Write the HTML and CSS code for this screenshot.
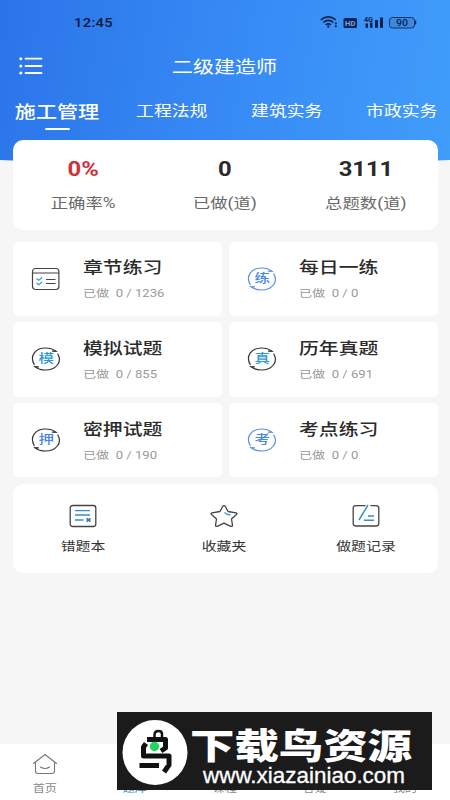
FILE: index.html
```html
<!DOCTYPE html>
<html lang="zh-CN">
<head>
<meta charset="utf-8">
<title>二级建造师</title>
<link rel="stylesheet" href="styles.css">
</head>
<body>
<svg width="0" height="0" class="defs">
  <defs>
    <g id="ring" fill="none" stroke-width="1.2" stroke-linecap="round">
      <path d="M3.2 17.500C-1.500 9 4 1 14.500 1c4.500 0 8 1.300 10.500 3.300l-3.500-.1M26.800 7C31.500 15 25 23 14.500 23c-4.500 0-8-1.300-10.500-3.300l3.500.1"/>
    </g>
  </defs>
</svg>
<div class="app">
  <header class="header">
    <div class="status">
      <span class="w clock">12:45</span>
      <svg class="signals" width="98" height="16" viewBox="0 0 98 16">
        <g fill="none" stroke="#0c2450" stroke-width="1.700">
          <path d="M.8 5.800Q8.300-.2 15.800 5.800M3.300 8.400Q8.300 4.400 13.300 8.400M5.700 10.800Q8.300 8.800 10.900 10.800"/>
        </g>
        <g fill="#0c2450">
          <circle cx="8.300" cy="12.700" r="1.100"/><circle cx="15.800" cy="9.400" r="1.100"/><circle cx="15.800" cy="12.300" r="1.100"/>
          <rect x="23.500" y="4" width="13.500" height="10" rx="1.500"/>
          <rect x="45.500" y="9.500" width="2.500" height="4.300"/><rect x="50" y="8.500" width="2.500" height="5.300"/><rect x="55" y="6" width="3" height="7.800"/><rect x="60" y="3.500" width="3" height="10.300"/>
          <rect x="94.500" y="6.500" width="1.700" height="4" rx=".8"/>
        </g>
        <text x="25" y="11.500" class="hd" textLength="10.500" lengthAdjust="spacingAndGlyphs">HD</text>
        <text x="44" y="7.500" class="net" textLength="9" lengthAdjust="spacingAndGlyphs">4G</text>
        <rect x="69.500" y="3.500" width="25" height="10.500" rx="3" fill="#3f88e2" stroke="#143260"/>
        <text x="76" y="12" class="pct" textLength="12" lengthAdjust="spacingAndGlyphs">90</text>
      </svg>
    </div>
    <div class="titlebar">
      <svg class="menu" width="24" height="18" viewBox="0 0 24 18">
        <g stroke="#fff" stroke-width="1.800" stroke-linecap="round"><path d="M6.500 1.700H22.500M6.500 9H22.500M6.500 16H22.500"/></g>
        <g fill="#fff"><circle cx="1.800" cy="1.700" r="1.500"/><circle cx="1.800" cy="9" r="1.500"/><circle cx="1.800" cy="16" r="1.500"/></g>
      </svg>
      <h1><span class="w">二级建造师</span></h1>
    </div>
    <nav class="tabs">
      <div class="tab on"><span class="w">施工管理</span></div>
      <div class="tab"><span class="w">工程法规</span></div>
      <div class="tab"><span class="w">建筑实务</span></div>
      <div class="tab"><span class="w">市政实务</span></div>
    </nav>
  </header>
  <main>
    <section class="panel stats">
      <div class="stat"><b class="w red">0%</b><span class="w">正确率%</span></div>
      <div class="stat"><b class="w">0</b><span class="w">已做(道)</span></div>
      <div class="stat"><b class="w">3111</b><span class="w">总题数(道)</span></div>
    </section>
    <section class="grid">
      <div class="card">
        <svg class="ico" width="30" height="24" viewBox="0 0 30 24" fill="none" stroke="#444" stroke-width="1.200"><rect x="1.500" y="1.500" width="26.400" height="21" rx="3"/><path d="M2 6H28M15 12.500H24.500M15 16.500H24.500"/><path stroke="#3a9bd0" d="M5.500 11.500l2.200 1.700 3.500-2.700M5.500 16l2.200 1.700 3.500-2.700"/></svg>
        <div class="info"><h2 class="w">章节练习</h2><p class="w">已做&nbsp; 0 / 1236</p></div>
      </div>
      <div class="card">
        <div class="ico blue"><svg width="30" height="24"><use href="#ring" stroke="#5c8edc"/></svg><span class="w">练</span></div>
        <div class="info"><h2 class="w">每日一练</h2><p class="w">已做&nbsp; 0 / 0</p></div>
      </div>
      <div class="card">
        <div class="ico cyan"><svg width="30" height="24"><use href="#ring" stroke="#333"/></svg><span class="w">模</span></div>
        <div class="info"><h2 class="w">模拟试题</h2><p class="w">已做&nbsp; 0 / 855</p></div>
      </div>
      <div class="card">
        <div class="ico cyan"><svg width="30" height="24"><use href="#ring" stroke="#333"/></svg><span class="w">真</span></div>
        <div class="info"><h2 class="w">历年真题</h2><p class="w">已做&nbsp; 0 / 691</p></div>
      </div>
      <div class="card">
        <div class="ico blue"><svg width="30" height="24"><use href="#ring" stroke="#333"/></svg><span class="w">押</span></div>
        <div class="info"><h2 class="w">密押试题</h2><p class="w">已做&nbsp; 0 / 190</p></div>
      </div>
      <div class="card">
        <div class="ico blue"><svg width="30" height="24"><use href="#ring" stroke="#5c8edc"/></svg><span class="w">考</span></div>
        <div class="info"><h2 class="w">考点练习</h2><p class="w">已做&nbsp; 0 / 0</p></div>
      </div>
    </section>
    <section class="panel tools">
      <div class="tool">
        <svg width="28" height="24" viewBox="0 0 28 24" fill="none" stroke="#444" stroke-width="1.300"><rect x="1.200" y="1.500" width="25.600" height="21" rx="2.500"/><path stroke="#3a8fc4" d="M6 6.700H21M6 11H21M6 16H14.500"/><path stroke="#2878ad" stroke-width="1.600" d="M17.500 14.300l4 3.400M21.500 14.300l-4 3.400"/></svg>
        <span class="w">错题本</span>
      </div>
      <div class="tool">
        <svg width="28" height="24" viewBox="0 0 28 24" fill="none" stroke="#444" stroke-width="1.300" stroke-linejoin="round"><path d="M14 1.600Q15 1.600 15.500 2.700L18 7.500L26 8.800Q27.500 9.500 26.500 10.500L21.500 15L22.500 21.300Q22.300 22.800 20.800 22.300L14 19.200L7.200 22.300Q5.700 22.800 5.500 21.300L6.500 15L1.500 10.500Q.5 9.500 2 8.800L10 7.500L12.500 2.700Q13 1.600 14 1.600Z"/><path stroke="#3a9bd0" d="M14.500 8.500Q17 11 20.500 11"/></svg>
        <span class="w">收藏夹</span>
      </div>
      <div class="tool">
        <svg width="28" height="24" viewBox="0 0 28 24" fill="none" stroke="#444" stroke-width="1.300"><path d="M13.500 1.700H4Q1.200 1.700 1.200 4V19.500Q1.200 22 4 22H24Q26.800 22 26.800 19.500V4Q26.800 1.700 24 1.700H18.500"/><path stroke="#3a8fc4" stroke-width="1.500" d="M16 1L7 16M16 12H22M12 16.300H22"/></svg>
        <span class="w">做题记录</span>
      </div>
    </section>
  </main>
  <footer class="tabbar">
    <div class="item"><svg width="26" height="22" viewBox="0 0 26 22" fill="none" stroke="#777" stroke-width="1.100" stroke-linecap="round" stroke-linejoin="round"><path d="M1.500 10.500L13 1.500L24.500 10.500M3.500 9.200V18Q3.500 20.500 6 20.500H20Q22.500 20.500 22.500 18V9.200M8.500 14Q13 17 17.500 14"/></svg><span class="w">首页</span></div>
    <div class="item active"><span class="w">题库</span></div>
    <div class="item"><span class="w">课程</span></div>
    <div class="item"><span class="w">答疑</span></div>
    <div class="item"><span class="w">我的</span></div>
  </footer>
  <div class="banner">
    <svg width="315" height="78" viewBox="0 0 315 78">
      <circle cx="38" cy="40.500" r="32.500" fill="#fff"/>
      <g fill="none" stroke="#111" stroke-width="5" stroke-linejoin="round">
        <path stroke-width="2.500" d="M37.500 26V23Q37.500 19 41.500 19Q45 19 45 22V26"/>
        <path d="M30 27.500H48.500V36L44 39M29 31.500L26.500 35V44H52V53L47 60M22.500 53.500H42"/>
      </g>
      <circle cx="37.500" cy="34.500" r="4.700" fill="#20d65c"/>
      <text class="brand" x="73" y="46.500" textLength="222" lengthAdjust="spacingAndGlyphs">下载鸟资源</text>
      <text class="url" x="86" y="70.500" textLength="202" lengthAdjust="spacingAndGlyphs">www.xiazainiao.com</text>
    </svg>
  </div>
</div>
</body>
</html>
```
FILE: styles.css
```css
* { box-sizing: border-box; margin: 0; padding: 0; }
body { font-family: Roboto, "Noto Sans CJK SC", sans-serif; color: #2b2b2b; background: #f6f6f7; }
svg { display: block; flex: none; }
.defs { position: absolute; }
.app { position: relative; width: 450px; height: 800px; overflow: hidden; display: flex; flex-direction: column; }

/* extended letterforms */
.w { display: inline-block; transform: scaleX(1.24); white-space: nowrap; }

.header { height: 165px; flex: none; color: #fff; background: linear-gradient(100deg, #2b74e8 0%, #3689f5 48%, #409dfa 100%); clip-path: path("M0 0H450V160Q225 170 0 160Z"); }
.status { height: 45px; padding: 14px 33px 0 74px; display: flex; justify-content: space-between; color: #0b1838; }
.clock { font-size: 13px; line-height: 18px; font-weight: 500; letter-spacing: .3px; transform-origin: left; transform: scaleX(1.13); }
.signals { margin-right: -1px; }
.hd { font: bold 7px Roboto; fill: #6aa6f4; }
.net { font: bold 6.500px Roboto; fill: #0c2450; }
.pct { font: 500 8.500px Roboto; fill: #0c2450; }
.titlebar { height: 42px; display: grid; grid-template-columns: 60px 1fr 61px; align-items: center; }
.menu { margin-left: 19px; }
.titlebar h1 { text-align: center; font-size: 17px; line-height: 24px; font-weight: 400; padding-top: 1px; }
.tabs { width: 460px; margin-left: -.5px; display: grid; grid-template-columns: repeat(4, 115px); height: 46px; }
.tab { display: flex; flex-direction: column; align-items: center; font-size: 14.400px; line-height: 24px; padding-top: 13px; }
.tab.on { font-size: 17px; font-weight: 500; }
.tab.on::after { content: ""; width: 25px; height: 2px; border-radius: 1px; background: #fff; margin-top: 4px; }

main { margin-top: -25px; padding: 0 12.500px; flex: 1; position: relative; }
.panel { background: #fff; border-radius: 10px; display: grid; grid-template-columns: repeat(3, 1fr); }
.stats { height: 89.500px; padding-top: 17px; }
.stat { display: flex; flex-direction: column; align-items: center; font-size: 14px; color: #686868; margin-left: -1px; }
.stat b { font-size: 20px; line-height: 24px; font-weight: 700; color: #2a2a2a; transform: scaleX(1.19); }
.stat .w + .w { line-height: 22px; margin-top: 11px; }
.stat b.red { color: #cf323a; }

.grid { display: grid; grid-template-columns: 1fr 1fr; grid-auto-rows: 74.500px; gap: 6.200px 7px; margin: 12px 0 6.500px; }
.card { background: #fff; border-radius: 5px; display: flex; align-items: center; padding-left: 18.500px; }
.ico { width: 30px; height: 24px; flex: none; }
div.ico { display: grid; place-items: center; }
div.ico > * { grid-area: 1 / 1; }
div.ico span { font-size: 12.500px; line-height: 18px; font-weight: 500; }
.blue { color: #4a86e6; }
.cyan { color: #3299d8; }
.info { display: flex; flex-direction: column; align-items: flex-start; margin: 1px 0 0 21.500px; }
.info .w { transform-origin: left; }
.info h2 { font-size: 16px; line-height: 24px; font-weight: 500; }
.info p { font-size: 10.700px; line-height: 16px; margin-top: 6px; color: #999; transform: scaleX(1.225); }

.tools { height: 89px; padding-top: 20px; }
.tool { display: flex; flex-direction: column; align-items: center; font-size: 12px; color: #333; margin-left: -1px; }
.tool span { line-height: 18px; margin-top: 10px; }

.tabbar { height: 56px; flex: none; background: #fff; display: grid; grid-template-columns: repeat(5, 1fr); }
.item { display: flex; flex-direction: column; align-items: center; justify-content: flex-end; font-size: 9.800px; line-height: 14px; color: #888; padding-bottom: 4px; }
.item svg { margin-bottom: 7px; }
.active { color: #2f86c8; }
.banner { position: absolute; left: 117px; top: 712px; width: 315px; height: 78px; background: #1b1b1b; }
.brand { font: 900 35.500px "Noto Sans CJK SC", sans-serif; fill: #fff; }
.url { font: 22px "Liberation Sans", sans-serif; fill: #fff; stroke: #fff; stroke-width: .3px; }
```
